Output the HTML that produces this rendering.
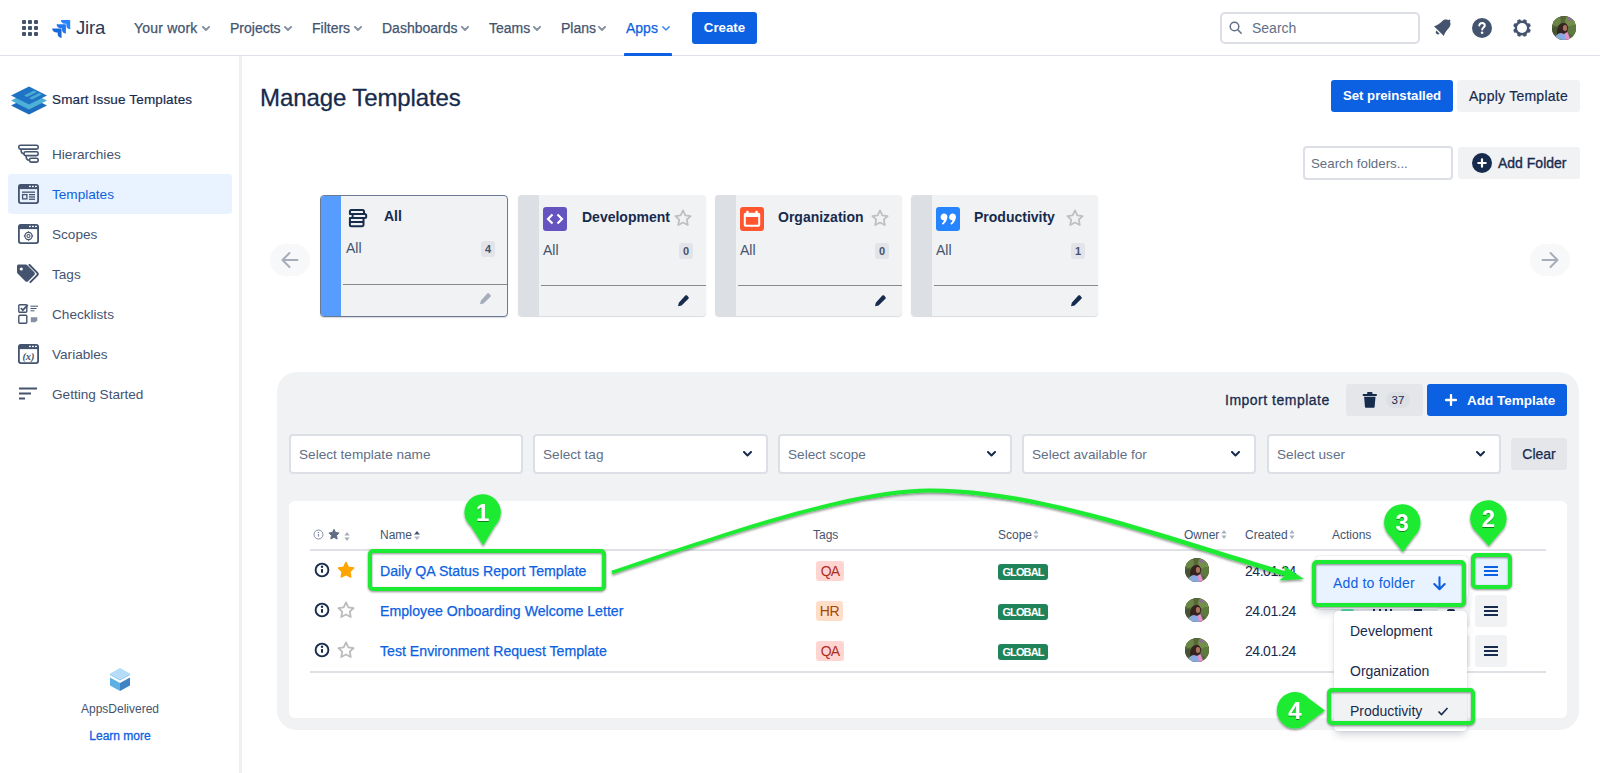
<!DOCTYPE html>
<html><head><meta charset="utf-8"><title>Manage Templates</title>
<style>
*{box-sizing:border-box;margin:0;padding:0}
html,body{width:1600px;height:773px;overflow:hidden;background:#fff}
body{font-family:"Liberation Sans",sans-serif;color:#172b4d;font-size:14px;position:relative}
.abs{position:absolute}
.t{position:absolute;white-space:nowrap;line-height:16px}
/* NAV */
#nav{position:absolute;left:0;top:0;width:1600px;height:56px;border-bottom:1px solid #dfe1e8;background:#fff}
.ni{position:absolute;top:20px;font-size:14px;color:#44546f;white-space:nowrap;line-height:16px;-webkit-text-stroke:.25px currentColor}
.chev{position:absolute;top:25.700px;width:8px;height:5.300px;margin-left:1px}
#create{position:absolute;left:692px;top:12px;width:65px;height:32px;background:#0c61e2;border-radius:3px;color:#fff;font-weight:bold;font-size:13.300px;line-height:32px;text-align:center}
#search{position:absolute;left:1220px;top:12px;width:200px;height:32px;border:2px solid #dcdfe5;border-radius:5px}
/* SIDEBAR */
#side{position:absolute;left:0;top:56px;width:242px;height:717px;border-right:3px solid #eeeff3}
.si{position:absolute;left:52px;font-size:13.600px;color:#44546f;line-height:16px;white-space:nowrap}
.sic{position:absolute;left:18px}
/* MAIN */
.btn{position:absolute;border-radius:3px;height:32px;line-height:32px;font-size:14px;text-align:center;white-space:nowrap}
.bblue{background:#0c61e2;color:#fff;font-weight:bold}
.bgrey{background:#f1f2f4;color:#172b4d}
.card{position:absolute;top:195px;height:121px;background:#f1f2f4;border-radius:4px;overflow:hidden;box-shadow:0 1px 1px rgba(9,30,66,.16)}
.card .stripe{position:absolute;left:0;top:0;bottom:0;width:21px;background:#dcdfe4}
.card .sep{position:absolute;left:23px;right:0;top:90px;height:1px;background:#8a8a8a}
.card .ttl{position:absolute;top:14px;font-weight:bold;font-size:14px;line-height:16px;color:#172b4d;white-space:nowrap}
.card .sub{position:absolute;left:25px;top:47px;font-size:14px;line-height:16px;color:#44546f}
.card .bdg{position:absolute;left:161px;top:48px;width:14px;height:16px;border-radius:3px;background:#e2e4e9;font-size:11px;font-weight:bold;line-height:16px;text-align:center;color:#44546f}
.card .ico{position:absolute;left:25px;top:12px;width:24px;height:24px;border-radius:3px}
.fin{position:absolute;top:434px;width:235px;height:40px;border:2px solid #dcdfe5;border-radius:4px;background:#fff;font-size:13.600px;color:#626f86;line-height:37px;padding-left:8px;white-space:nowrap}
.th{position:absolute;top:528px;font-size:12px;line-height:14px;color:#44546f;white-space:nowrap}
.lnk{position:absolute;left:380px;font-size:14.150px;line-height:20px;-webkit-text-stroke:.25px #0c61e2;color:#0c61e2;white-space:nowrap}
.tag{position:absolute;left:816px;height:20px;border-radius:3px;font-size:14px;line-height:20px;text-align:center}
.glob{position:absolute;left:998px;width:50px;height:16px;border-radius:3px;background:#1f845a;color:#fff;font-weight:bold;font-size:11px;letter-spacing:-.9px;line-height:16px;text-align:center}
.date{position:absolute;left:1245px;font-size:14px;line-height:18px;letter-spacing:-.45px;color:#172b4d}
.av{position:absolute;border-radius:50%;overflow:hidden;background:#4a4a32}
.mbtn{position:absolute;left:1475px;width:32px;height:32px;border-radius:3px;background:#f1f2f4}
.gbox{position:absolute;border:4px solid #1deb33;border-radius:5px;filter:drop-shadow(0 1.500px 1px rgba(0,0,0,.45))}
</style></head><body>
<div id="nav">
 <svg class="abs" style="left:22px;top:20px" width="16" height="16" viewBox="0 0 16 16" fill="#44546f"><rect x="0" y="0" width="4" height="4" rx="1"/><rect x="6" y="0" width="4" height="4" rx="1"/><rect x="12" y="0" width="4" height="4" rx="1"/><rect x="0" y="6" width="4" height="4" rx="1"/><rect x="6" y="6" width="4" height="4" rx="1"/><rect x="12" y="6" width="4" height="4" rx="1"/><rect x="0" y="12" width="4" height="4" rx="1"/><rect x="6" y="12" width="4" height="4" rx="1"/><rect x="12" y="12" width="4" height="4" rx="1"/></svg>
 <!-- jira logo -->
 <svg class="abs" style="left:52px;top:19px" width="18.500" height="18.500" viewBox="0 0 20 20"><path d="M19 1H9.6c0 2.3 1.9 4.2 4.2 4.2h1.7v1.7c0 2.3 1.9 4.2 4.2 4.200V1.700A.7.7 0 0 0 19 1z" fill="#2684ff"/><path d="M14.300 5.700H4.900c0 2.300 1.900 4.200 4.200 4.200h1.700v1.700c0 2.300 1.900 4.200 4.200 4.200V6.400a.7.700 0 0 0-.7-.7z" fill="#2276ee"/><path d="M9.600 10.400H.2c0 2.300 1.900 4.200 4.200 4.200h1.700v1.700c0 2.300 1.900 4.200 4.200 4.200v-9.400a.7.700 0 0 0-.7-.7z" fill="#1868db"/></svg>
 <div class="t" style="left:76px;top:16px;font-size:18.500px;line-height:24px;color:#253858;letter-spacing:-0.2px">Jira</div>
 <div class="ni" style="left:134px;letter-spacing:.2px">Your work</div>
 <div class="ni" style="left:230px">Projects</div>
 <div class="ni" style="left:312px">Filters</div>
 <div class="ni" style="left:382px">Dashboards</div>
 <div class="ni" style="left:489px">Teams</div>
 <div class="ni" style="left:561px">Plans</div>
 <div class="ni" style="left:626px;color:#0c61e2">Apps</div>
 <svg class="chev" style="left:201px" viewBox="0 0 9 6"><path d="M1 1l3.500 3.500L8 1" fill="none" stroke="#8590a2" stroke-width="2.200" stroke-linecap="round" stroke-linejoin="round"/></svg>
 <svg class="chev" style="left:283px" viewBox="0 0 9 6"><path d="M1 1l3.500 3.500L8 1" fill="none" stroke="#8590a2" stroke-width="2.200" stroke-linecap="round" stroke-linejoin="round"/></svg>
 <svg class="chev" style="left:353px" viewBox="0 0 9 6"><path d="M1 1l3.500 3.500L8 1" fill="none" stroke="#8590a2" stroke-width="2.200" stroke-linecap="round" stroke-linejoin="round"/></svg>
 <svg class="chev" style="left:460px" viewBox="0 0 9 6"><path d="M1 1l3.500 3.500L8 1" fill="none" stroke="#8590a2" stroke-width="2.200" stroke-linecap="round" stroke-linejoin="round"/></svg>
 <svg class="chev" style="left:532px" viewBox="0 0 9 6"><path d="M1 1l3.500 3.500L8 1" fill="none" stroke="#8590a2" stroke-width="2.200" stroke-linecap="round" stroke-linejoin="round"/></svg>
 <svg class="chev" style="left:597px" viewBox="0 0 9 6"><path d="M1 1l3.500 3.500L8 1" fill="none" stroke="#8590a2" stroke-width="2.200" stroke-linecap="round" stroke-linejoin="round"/></svg>
 <svg class="chev" style="left:661px" viewBox="0 0 9 6"><path d="M1 1l3.500 3.500L8 1" fill="none" stroke="#4c8df0" stroke-width="1.800" stroke-linecap="round" stroke-linejoin="round"/></svg>
 <div class="abs" style="left:624px;top:53px;width:48px;height:3px;background:#0c61e2;border-radius:1px 1px 0 0"></div>
 <div id="create">Create</div>
 <div id="search">
  <svg class="abs" style="left:7px;top:7px" width="14" height="14" viewBox="0 0 14 14"><circle cx="5.500" cy="5.500" r="4.300" fill="none" stroke="#626f86" stroke-width="1.500"/><path d="M8.800 8.800l3.400 3.400" stroke="#626f86" stroke-width="1.500" stroke-linecap="round"/></svg>
  <div class="t" style="left:30px;top:6px;font-size:14px;color:#626f86">Search</div>
 </div>
 <!-- bell -->
 <svg class="abs" style="left:1431.900px;top:14.100px" width="24" height="24" viewBox="0 0 24 24"><g transform="translate(12 12) rotate(45)" fill="#44546f"><path d="M-7 7.200L7 7.200C5.300 4.500 4.700 1 4.700-2.400C4.700-5.200 2.600-7.300 0-7.300C-2.600-7.300-4.700-5.200-4.700-2.400C-4.700 1-5.300 4.500-7 7.200Z"/><circle cx="0" cy="-7.400" r="1.200"/><path d="M-2.300 8.500A2.300 2.300 0 0 0 2.300 8.500Z"/></g></svg>
 <!-- help -->
 <svg class="abs" style="left:1471px;top:17px" width="22" height="22" viewBox="0 0 22 22"><circle cx="11" cy="11" r="10" fill="#44546f"/><path d="M8.300 8.600c0-1.600 1.200-2.700 2.800-2.700s2.700 1 2.700 2.500c0 2-2.600 2.100-2.600 4.100" fill="none" stroke="#fff" stroke-width="2" stroke-linecap="round"/><circle cx="11.100" cy="15.700" r="1.300" fill="#fff"/></svg>
 <!-- gear -->
 <svg class="abs" style="left:1510.600px;top:16.700px" width="22" height="22" viewBox="0 0 22 22"><g fill="#44546f"><circle cx="11" cy="11" r="7.400"/><rect x="9.200" y="2.100" width="3.600" height="17.800" rx="1" transform="rotate(22.500 11 11)"/><rect x="9.200" y="2.100" width="3.600" height="17.800" rx="1" transform="rotate(67.500 11 11)"/><rect x="9.200" y="2.100" width="3.600" height="17.800" rx="1" transform="rotate(112.500 11 11)"/><rect x="9.200" y="2.100" width="3.600" height="17.800" rx="1" transform="rotate(157.500 11 11)"/></g><circle cx="11" cy="11" r="5" fill="#fff"/></svg>
 <!-- avatar -->
 <div class="av" style="left:1552px;top:16px;width:24px;height:24px"><svg width="24" height="24" viewBox="0 0 24 24"><rect width="24" height="24" fill="#56673a"/><circle cx="4" cy="5" r="5" fill="#6c8547"/><circle cx="19" cy="5" r="6" fill="#748f4a"/><circle cx="21" cy="14" r="5" fill="#5f7a40"/><circle cx="3" cy="15" r="4" fill="#465433"/><circle cx="17" cy="3" r="2" fill="#8d6f9a"/><path d="M5.500 20c-1.500-6 .5-13 6-13 3 0 4.500 2 4.500 5l-2 8z" fill="#35231e"/><ellipse cx="13" cy="12" rx="2.100" ry="3" fill="#a77462"/><path d="M3 24c0-4 2-6.500 6-7l5 1.500V24z" fill="#86aadd"/><path d="M12.500 17.500l3-1.500 3 8h-4.500z" fill="#e88fcd"/></svg></div>
</div>

<div id="side">
 <!-- logo -->
 <svg class="abs" style="left:10px;top:30px" width="38" height="29" viewBox="0 0 38 29"><path d="M19 10.500L37 19.500 19 28.500 1 19.500z" fill="#1d6cc0"/><path d="M19 5.500L37 14.500 19 23.500 1 14.500z" fill="#4eb0d6"/><path d="M19 .5L37 9.500 19 18.500 1 9.500z" fill="#1f73c4"/><path d="M14 9.500l10-5 3 1.500-10 5zM19 12l10-5 3 1.500-10 5z" fill="#4eb0d6" opacity=".9"/></svg>
 <div class="t" style="left:52px;top:36px;font-size:13.500px;color:#172b4d;letter-spacing:.15px;-webkit-text-stroke:.2px #172b4d">Smart Issue Templates</div>
 <div class="abs" style="left:8px;top:118px;width:224px;height:40px;background:#e9f2ff;border-radius:3px"></div>
 <div class="si" style="top:91px">Hierarchies</div>
 <div class="si" style="top:131px;color:#0c61e2">Templates</div>
 <div class="si" style="top:171px">Scopes</div>
 <div class="si" style="top:211px">Tags</div>
 <div class="si" style="top:251px">Checklists</div>
 <div class="si" style="top:291px">Variables</div>
 <div class="si" style="top:331px">Getting Started</div>
 <!-- hierarchies icon -->
 <svg class="sic" style="top:88px" width="21" height="20" viewBox="0 0 21 20" fill="none" stroke="#44546f" stroke-width="1.600"><rect x=".8" y="1.300" width="19.400" height="3.800" rx="1.600"/><rect x="6" y="7.800" width="14.200" height="3.800" rx="1.600"/><rect x="11.500" y="14.300" width="8.700" height="3.800" rx="1.600"/><path d="M3 5.200c0 3 1.500 4.500 3 4.500M8 11.700c0 3 1.500 4.500 3.500 4.500"/></svg>
 <!-- templates icon -->
 <svg class="sic" style="top:128px" width="21" height="20" viewBox="0 0 21 20"><rect x=".9" y=".9" width="19.200" height="18.200" rx="2" fill="none" stroke="#44546f" stroke-width="1.800"/><rect x=".9" y=".9" width="19.200" height="4.200" fill="#44546f"/><rect x="11" y="1.800" width="1.800" height="1.300" fill="#fff"/><rect x="14" y="1.800" width="1.800" height="1.300" fill="#fff"/><rect x="17" y="1.800" width="1.800" height="1.300" fill="#fff"/><rect x="4" y="7.500" width="13" height="1.300" fill="#44546f"/><rect x="4.600" y="10.600" width="4.300" height="4.300" fill="none" stroke="#44546f" stroke-width="1.300"/><rect x="11" y="10" width="6" height="1.300" fill="#44546f"/><rect x="11" y="12.300" width="6" height="1.300" fill="#44546f"/><rect x="11" y="14.600" width="6" height="1.300" fill="#44546f"/></svg>
 <!-- scopes icon -->
 <svg class="sic" style="top:168px" width="21" height="20" viewBox="0 0 21 20"><rect x=".9" y=".9" width="19.200" height="18.200" rx="2" fill="none" stroke="#44546f" stroke-width="1.800"/><rect x=".9" y=".9" width="19.200" height="4.200" fill="#44546f"/><rect x="11" y="1.800" width="1.800" height="1.300" fill="#fff"/><rect x="14" y="1.800" width="1.800" height="1.300" fill="#fff"/><rect x="17" y="1.800" width="1.800" height="1.300" fill="#fff"/><circle cx="10.500" cy="12" r="3.600" fill="none" stroke="#44546f" stroke-width="1.200"/><circle cx="10.500" cy="12" r="1.500" fill="none" stroke="#44546f" stroke-width="1.100"/><path d="M10.500 7.300v1.400M10.500 15.300v1.400M5.800 12h1.400M13.800 12h1.400" stroke="#44546f" stroke-width="1.100"/></svg>
 <!-- tags icon -->
 <svg class="abs" style="left:16px;top:208px" width="24" height="20" viewBox="0 0 24 20"><path d="M1 2.200C1 1.300 1.700.6 2.600.6h7.200c.6 0 1.100.2 1.500.6l7 7c.8.800.8 2 0 2.800l-6.200 6.200c-.8.800-2 .8-2.800 0l-7.700-7.600C1.200 9.200 1 8.700 1 8.100z" fill="#44546f"/><circle cx="5.300" cy="5" r="1.600" fill="#fff"/><path d="M13.500 1l7.600 7.600c.8.800.8 2 0 2.800l-6.700 6.700" fill="none" stroke="#44546f" stroke-width="2" stroke-linecap="round"/></svg>
 <!-- checklists icon -->
 <svg class="sic" style="top:248px" width="21" height="20" viewBox="0 0 21 20" fill="none" stroke="#44546f"><rect x=".8" y=".8" width="8" height="7.400" rx="1" stroke-width="1.400"/><path d="M2.800 4l2 2.200L9.800.8" stroke-width="1.700"/><rect x=".8" y="11.200" width="8" height="8" rx="1" stroke-width="1.400"/><path d="M12.500 2.200h7.500M12.500 4.500h6M12.500 6.800h4" stroke-width="1"/><path d="M12.800 13.200h6.500v3l-2 2h-4.500z" fill="#8590a2" stroke="none"/></svg>
 <!-- variables icon -->
 <svg class="sic" style="top:288px" width="21" height="20" viewBox="0 0 21 20"><rect x=".9" y=".9" width="19.200" height="18.200" rx="2" fill="none" stroke="#44546f" stroke-width="1.800"/><rect x=".9" y=".9" width="19.200" height="4.200" fill="#44546f"/><rect x="11" y="1.800" width="1.800" height="1.300" fill="#fff"/><rect x="14" y="1.800" width="1.800" height="1.300" fill="#fff"/><rect x="17" y="1.800" width="1.800" height="1.300" fill="#fff"/><text x="10.500" y="15.500" text-anchor="middle" font-family="Liberation Serif,serif" font-style="italic" font-weight="bold" font-size="10.500" fill="#44546f">(x)</text></svg>
 <!-- getting started icon -->
 <svg class="abs" style="left:19px;top:331px" width="18" height="13" viewBox="0 0 18 13" stroke="#44546f" stroke-width="2"><path d="M0 1.500h18M0 6.500h12M0 11.500h6"/></svg>
 <!-- footer -->
 <svg class="abs" style="left:110px;top:612px" width="20" height="23" viewBox="0 0 20 23"><path d="M0 9.500L10 15v8L0 17.500z" fill="#5fb0e2"/><path d="M20 9.500L10 15v8l10-5.500z" fill="#3f83c4"/><path d="M0 5.500L10 11l10-5.500V7L10 12.500 0 7z" fill="#8fcaf0"/><path d="M10 0l10 5.500L10 11 0 5.500z" fill="#b5dcf8"/></svg>
 <div class="t" style="left:0;width:240px;text-align:center;top:645px;font-size:12px;color:#44546f">AppsDelivered</div>
 <div class="t" style="left:0;width:240px;text-align:center;top:672px;font-size:12px;color:#0c61e2;-webkit-text-stroke:.3px #0c61e2">Learn more</div>
</div>

<!-- MAIN -->
<div class="t" style="left:260px;top:83px;font-size:24px;line-height:30px;color:#172b4d;letter-spacing:-.1px;-webkit-text-stroke:.3px #172b4d" id="h1">Manage Templates</div>
<div class="btn bblue" style="left:1331px;top:80px;width:122px;font-size:13.200px">Set preinstalled</div>
<div class="btn bgrey" style="left:1457px;top:80px;width:123px;letter-spacing:.25px;-webkit-text-stroke:.2px #172b4d">Apply Template</div>
<div class="abs" style="left:1303px;top:146px;width:150px;height:34px;border:2px solid #dcdfe5;border-radius:4px"><div class="t" style="left:6px;top:8px;font-size:13.300px;color:#626f86">Search folders...</div></div>
<div class="btn bgrey" style="left:1458px;top:147px;width:122px"></div>
<svg class="abs" style="left:1472px;top:153px" width="20" height="20" viewBox="0 0 20 20"><circle cx="10" cy="10" r="10" fill="#172b4d"/><path d="M10 6.300v7.400M6.300 10h7.400" stroke="#fff" stroke-width="2.200" stroke-linecap="round"/></svg>
<div class="t" style="left:1498px;top:155px;font-size:14px;color:#172b4d;-webkit-text-stroke:.35px #172b4d">Add Folder</div>
<!-- arrows -->
<div class="abs" style="left:270px;top:244px;width:40px;height:32px;border-radius:16px;background:#f7f8f9"><svg class="abs" style="left:11px;top:7px" width="18" height="18" viewBox="0 0 18 18"><path d="M16.500 9H2M8.500 2L1.500 9l7 7" fill="none" stroke="#a5adba" stroke-width="2" stroke-linecap="round" stroke-linejoin="round"/></svg></div>
<div class="abs" style="left:1530px;top:244px;width:40px;height:32px;border-radius:16px;background:#f7f8f9"><svg class="abs" style="left:11px;top:7px" width="18" height="18" viewBox="0 0 18 18"><path d="M1.500 9H16M9.500 2l7 7-7 7" fill="none" stroke="#a5adba" stroke-width="2" stroke-linecap="round" stroke-linejoin="round"/></svg></div>
<!-- cards -->
<div class="card" style="left:320px;width:188px;height:122px;border:1px solid #6b7a94">
 <div class="stripe" style="background:#579dff;width:20px"></div>
 <div class="sep" style="left:22px;top:88px"></div>
 <svg class="abs" style="left:27px;top:12.800px" width="20" height="19" viewBox="0 0 20 19" fill="none" stroke="#172b4d" stroke-width="2" stroke-linejoin="round"><path d="M3.400 1H14.500a1.500 1.500 0 0 1 1.500 1.500V5.100H1.900V2.500a1.500 1.500 0 0 1 1.500-1.500z"/><path d="M4.600 5.100H16.700a1.500 1.500 0 0 1 1.500 1.500v1a1.500 1.500 0 0 1-1.500 1.500H4.600z"/><path d="M1.900 9.100H15.500V15.700a1.500 1.500 0 0 1-1.500 1.500H3.400a1.500 1.500 0 0 1-1.500-1.500zM1.900 13.100H15.500"/></svg>
 <div class="ttl" style="left:63px;top:12px">All</div>
 <div class="sub" style="left:25px;top:44px">All</div>
 <div class="bdg" style="left:160px;top:45px">4</div>
 <svg class="abs" style="left:158px;top:96px" width="13" height="13" viewBox="0 0 13 13"><path d="M8.300 1.600c.5-.5 1.300-.5 1.800 0l1.300 1.300c.5.500.5 1.300 0 1.800L4.600 11.500 1 12.300l.8-3.600z" fill="#a5adba"/></svg>
</div>
<div class="card" style="left:518px;width:188px">
 <div class="stripe"></div>
<div class="sep"></div>
 <div class="ico" style="background:#6554c0"><svg width="24" height="24" viewBox="0 0 24 24"><path d="M9.500 7.500L5 12l4.500 4.500M14.500 7.500L19 12l-4.500 4.500" fill="none" stroke="#fff" stroke-width="2.200"/></svg></div>
 <div class="ttl" style="left:64px">Development</div>
 <svg class="abs" style="left:156px;top:14px" width="18" height="17" viewBox="0 0 17 16"><path d="M8.500 1.300l2.200 4.600 5 .7-3.600 3.500.9 5-4.500-2.400L4 15.100l.9-5L1.300 6.600l5-.7z" fill="none" stroke="#c0c0c3" stroke-width="1.700" stroke-linejoin="round"/></svg>
 <div class="sub">All</div>
<div class="bdg">0</div>
 <svg class="abs" style="left:159px;top:99px" width="13" height="13" viewBox="0 0 13 13"><path d="M8.300 1.600c.5-.5 1.300-.5 1.800 0l1.300 1.300c.5.500.5 1.300 0 1.800L4.600 11.500 1 12.300l.8-3.600z" fill="#172b4d"/></svg>
</div>
<div class="card" style="left:715px;width:187px">
 <div class="stripe"></div>
<div class="sep"></div>
 <div class="ico" style="background:#ff5630"><svg width="24" height="24" viewBox="0 0 24 24"><rect x="3.800" y="5.800" width="16.400" height="14" rx="1.800" fill="#fff"/><rect x="6.300" y="3.800" width="2.300" height="4" rx=".6" fill="#fff"/><rect x="15.400" y="3.800" width="2.300" height="4" rx=".6" fill="#fff"/><rect x="5.800" y="10" width="12.400" height="7.800" rx=".6" fill="#ff5630"/></svg></div>
 <div class="ttl" style="left:63px">Organization</div>
 <svg class="abs" style="left:156px;top:14px" width="18" height="17" viewBox="0 0 17 16"><path d="M8.500 1.300l2.200 4.600 5 .7-3.600 3.500.9 5-4.500-2.400L4 15.100l.9-5L1.300 6.600l5-.7z" fill="none" stroke="#c0c0c3" stroke-width="1.700" stroke-linejoin="round"/></svg>
 <div class="sub">All</div>
<div class="bdg" style="left:160px">0</div>
 <svg class="abs" style="left:159px;top:99px" width="13" height="13" viewBox="0 0 13 13"><path d="M8.300 1.600c.5-.5 1.300-.5 1.800 0l1.300 1.300c.5.500.5 1.300 0 1.800L4.600 11.500 1 12.300l.8-3.600z" fill="#172b4d"/></svg>
</div>
<div class="card" style="left:911px;width:187px">
 <div class="stripe"></div>
<div class="sep"></div>
 <div class="ico" style="background:#2684ff"><svg width="24" height="24" viewBox="1.500 1.500 21 21" fill="#fff"><path d="M5.500 10.200a3 3 0 1 1 5.900.8c-.4 2.600-1.800 4.600-3.800 6l-1-1c1-.9 1.600-1.800 1.900-2.900a3 3 0 0 1-3-2.900zM13 10.200a3 3 0 1 1 5.900.8c-.4 2.600-1.800 4.600-3.800 6l-1-1c1-.9 1.600-1.800 1.900-2.900a3 3 0 0 1-3-2.900z"/></svg></div>
 <div class="ttl" style="left:63px">Productivity</div>
 <svg class="abs" style="left:155px;top:14px" width="18" height="17" viewBox="0 0 17 16"><path d="M8.500 1.300l2.200 4.600 5 .7-3.600 3.500.9 5-4.500-2.400L4 15.100l.9-5L1.300 6.600l5-.7z" fill="none" stroke="#c0c0c3" stroke-width="1.700" stroke-linejoin="round"/></svg>
 <div class="sub">All</div>
<div class="bdg" style="left:160px">1</div>
 <svg class="abs" style="left:159px;top:99px" width="13" height="13" viewBox="0 0 13 13"><path d="M8.300 1.600c.5-.5 1.300-.5 1.800 0l1.300 1.300c.5.500.5 1.300 0 1.800L4.600 11.500 1 12.300l.8-3.600z" fill="#172b4d"/></svg>
</div>

<div class="abs" style="left:277px;top:372px;width:1302px;height:358px;border-radius:20px;background:#f1f2f4"></div>
<div class="t" style="left:1225px;top:392px;font-size:14px;letter-spacing:.5px;color:#172b4d;-webkit-text-stroke:.3px #172b4d">Import template</div>
<div class="abs" style="left:1346px;top:384px;width:77px;height:32px;border-radius:3px;background:#e4e6ea"></div>
<svg class="abs" style="left:1362px;top:392px" width="15.600" height="15.800" viewBox="0 0 16 18" fill="#172b4d"><rect x="0" y="2.300" width="16" height="2.200" rx=".6"/><rect x="5" y="0" width="6" height="3" rx=".8"/><path d="M1.500 5.500h13l-1 11.200c0 .7-.6 1.300-1.300 1.300H3.800c-.7 0-1.300-.6-1.300-1.300z"/></svg>
<div class="abs" style="left:1386px;top:392px;width:24px;height:16px;border-radius:8px;background:#dcdfe4;font-size:11.500px;line-height:16px;text-align:center;color:#172b4d">37</div>
<div class="btn bblue" style="left:1427px;top:384px;width:140px"></div>
<svg class="abs" style="left:1445px;top:394px" width="12" height="12" viewBox="0 0 12 12"><path d="M6 1v10M1 6h10" stroke="#fff" stroke-width="2.300" stroke-linecap="round"/></svg>
<div class="t" style="left:1467px;top:392.600px;font-size:13.500px;font-weight:bold;color:#fff">Add Template</div>
<div class="fin" style="left:289px;width:234px">Select template name</div>
<div class="fin" style="left:533px">Select tag</div>
<div class="fin" style="left:778px;width:234px">Select scope</div>
<div class="fin" style="left:1022px;width:234px">Select available for</div>
<div class="fin" style="left:1267px;width:234px">Select user</div>
<svg class="abs" style="left:743px;top:451px" width="9" height="6" viewBox="0 0 9 6"><path d="M1 1l3.500 3.500L8 1" fill="none" stroke="#172b4d" stroke-width="2" stroke-linecap="round" stroke-linejoin="round"/></svg>
<svg class="abs" style="left:987px;top:451px" width="9" height="6" viewBox="0 0 9 6"><path d="M1 1l3.500 3.500L8 1" fill="none" stroke="#172b4d" stroke-width="2" stroke-linecap="round" stroke-linejoin="round"/></svg>
<svg class="abs" style="left:1231px;top:451px" width="9" height="6" viewBox="0 0 9 6"><path d="M1 1l3.500 3.500L8 1" fill="none" stroke="#172b4d" stroke-width="2" stroke-linecap="round" stroke-linejoin="round"/></svg>
<svg class="abs" style="left:1476px;top:451px" width="9" height="6" viewBox="0 0 9 6"><path d="M1 1l3.500 3.500L8 1" fill="none" stroke="#172b4d" stroke-width="2" stroke-linecap="round" stroke-linejoin="round"/></svg>
<div class="btn" style="left:1511px;top:438px;width:56px;background:#e4e6ea;color:#172b4d;-webkit-text-stroke:.25px #172b4d">Clear</div>
<!-- table card -->
<div class="abs" style="left:289px;top:501px;width:1278px;height:217px;border-radius:6px;background:#fff"></div>
<svg class="abs" style="left:312.500px;top:528.500px" width="11" height="11" viewBox="0 0 11 11"><circle cx="5.500" cy="5.500" r="4.500" fill="none" stroke="#8590a2" stroke-width="1"/><rect x="4.900" y="5" width="1.200" height="2.600" fill="#8590a2"/><circle cx="5.500" cy="3.500" r=".75" fill="#8590a2"/></svg>
<svg class="abs" style="left:328px;top:528px" width="12" height="12" viewBox="0 0 17 16"><path d="M8.500 1.300l2.200 4.600 5 .7-3.600 3.500.9 5-4.500-2.400L4 15.100l.9-5L1.300 6.600l5-.7z" fill="#5e6c84" stroke="#5e6c84" stroke-width="1.400" stroke-linejoin="round"/></svg>
<svg class="abs" style="left:344px;top:532px" width="6" height="9" viewBox="0 0 6 9" fill="#a5adba"><path d="M3 0l2.600 3.500H.4zM3 9L.4 5.500h5.200z"/></svg>
<div class="th" style="left:380px">Name</div>
<svg class="abs" style="left:414px;top:530.500px" width="6" height="9" viewBox="0 0 6 9"><path d="M3 0l3 3.500H0z" fill="#44546f"/><path d="M3 9L0 5.500h6z" fill="#b3b9c4"/></svg>
<div class="th" style="left:813px">Tags</div>
<div class="th" style="left:998px">Scope</div>
<svg class="abs" style="left:1033px;top:530px" width="6" height="9" viewBox="0 0 6 9" fill="#a8afbd"><path d="M3 0l2.600 3.500H.4zM3 9L.4 5.500h5.200z"/></svg>
<div class="th" style="left:1184px">Owner</div>
<svg class="abs" style="left:1221px;top:530px" width="6" height="9" viewBox="0 0 6 9" fill="#a8afbd"><path d="M3 0l2.600 3.500H.4zM3 9L.4 5.500h5.200z"/></svg>
<div class="th" style="left:1245px">Created</div>
<svg class="abs" style="left:1289px;top:530px" width="6" height="9" viewBox="0 0 6 9" fill="#a8afbd"><path d="M3 0l2.600 3.500H.4zM3 9L.4 5.500h5.200z"/></svg>
<div class="th" style="left:1332px">Actions</div>
<div class="abs" style="left:310px;top:549px;width:1236px;height:2px;background:#dfe1e6"></div>
<div class="abs" style="left:310px;top:671px;width:1236px;height:2px;background:#dfe1e6"></div>
<svg class="abs" style="left:314px;top:562px" width="16" height="16" viewBox="0 0 16 16"><circle cx="8" cy="8" r="6.400" fill="none" stroke="#172b4d" stroke-width="1.900"/><rect x="7" y="7" width="2" height="3.800" rx=".5" fill="#172b4d"/><circle cx="8" cy="4.800" r="1.200" fill="#172b4d"/></svg>
<svg class="abs" style="left:337px;top:561px" width="18" height="17" viewBox="0 0 17 16"><path d="M8.500 1.300l2.200 4.600 5 .7-3.600 3.500.9 5-4.500-2.400L4 15.100l.9-5L1.300 6.600l5-.7z" fill="#ffa400" stroke="#ffa400" stroke-width="1.400" stroke-linejoin="round"/></svg>
<div class="lnk" style="top:561px">Daily QA Status Report Template</div>
<div class="tag" style="top:561px;width:28px;background:#ffd5d2;color:#ae2e24;letter-spacing:-.8px">QA</div>
<div class="glob" style="top:564px">GLOBAL</div>
<div class="av" style="left:1185px;top:558px;width:24px;height:24px"><svg width="24" height="24" viewBox="0 0 24 24"><rect width="24" height="24" fill="#56673a"/><circle cx="4" cy="5" r="5" fill="#6c8547"/><circle cx="19" cy="5" r="6" fill="#748f4a"/><circle cx="21" cy="14" r="5" fill="#5f7a40"/><circle cx="3" cy="15" r="4" fill="#465433"/><circle cx="17" cy="3" r="2" fill="#8d6f9a"/><path d="M5.500 20c-1.500-6 .5-13 6-13 3 0 4.500 2 4.500 5l-2 8z" fill="#35231e"/><ellipse cx="13" cy="12" rx="2.100" ry="3" fill="#a77462"/><path d="M3 24c0-4 2-6.500 6-7l5 1.500V24z" fill="#86aadd"/><path d="M12.500 17.500l3-1.500 3 8h-4.500z" fill="#e88fcd"/></svg></div>
<div class="date" style="top:562px">24.01.24</div>
<div class="mbtn" style="top:555px;background:#e9f2ff"></div>
<svg class="abs" style="left:1484px;top:566px" width="14" height="10" viewBox="0 0 14 10" stroke="#0c61e2" stroke-width="2"><path d="M0 1h14M0 5h14M0 9h14"/></svg>
<svg class="abs" style="left:314px;top:602px" width="16" height="16" viewBox="0 0 16 16"><circle cx="8" cy="8" r="6.400" fill="none" stroke="#172b4d" stroke-width="1.900"/><rect x="7" y="7" width="2" height="3.800" rx=".5" fill="#172b4d"/><circle cx="8" cy="4.800" r="1.200" fill="#172b4d"/></svg>
<svg class="abs" style="left:337px;top:601px" width="18" height="17" viewBox="0 0 17 16"><path d="M8.500 1.300l2.200 4.600 5 .7-3.600 3.500.9 5-4.500-2.400L4 15.100l.9-5L1.300 6.600l5-.7z" fill="none" stroke="#bcbcbe" stroke-width="1.700" stroke-linejoin="round"/></svg>
<div class="lnk" style="top:601px">Employee Onboarding Welcome Letter</div>
<div class="tag" style="top:601px;width:27px;background:#fedec8;color:#a54800;letter-spacing:-.3px">HR</div>
<div class="glob" style="top:604px">GLOBAL</div>
<div class="av" style="left:1185px;top:598px;width:24px;height:24px"><svg width="24" height="24" viewBox="0 0 24 24"><rect width="24" height="24" fill="#56673a"/><circle cx="4" cy="5" r="5" fill="#6c8547"/><circle cx="19" cy="5" r="6" fill="#748f4a"/><circle cx="21" cy="14" r="5" fill="#5f7a40"/><circle cx="3" cy="15" r="4" fill="#465433"/><circle cx="17" cy="3" r="2" fill="#8d6f9a"/><path d="M5.500 20c-1.500-6 .5-13 6-13 3 0 4.500 2 4.500 5l-2 8z" fill="#35231e"/><ellipse cx="13" cy="12" rx="2.100" ry="3" fill="#a77462"/><path d="M3 24c0-4 2-6.500 6-7l5 1.500V24z" fill="#86aadd"/><path d="M12.500 17.500l3-1.500 3 8h-4.500z" fill="#e88fcd"/></svg></div>
<div class="date" style="top:602px">24.01.24</div>
<div class="mbtn" style="top:595px"></div>
<svg class="abs" style="left:1484px;top:606px" width="14" height="10" viewBox="0 0 14 10" stroke="#172b4d" stroke-width="2"><path d="M0 1h14M0 5h14M0 9h14"/></svg>
<svg class="abs" style="left:314px;top:642px" width="16" height="16" viewBox="0 0 16 16"><circle cx="8" cy="8" r="6.400" fill="none" stroke="#172b4d" stroke-width="1.900"/><rect x="7" y="7" width="2" height="3.800" rx=".5" fill="#172b4d"/><circle cx="8" cy="4.800" r="1.200" fill="#172b4d"/></svg>
<svg class="abs" style="left:337px;top:641px" width="18" height="17" viewBox="0 0 17 16"><path d="M8.500 1.300l2.200 4.600 5 .7-3.600 3.500.9 5-4.500-2.400L4 15.100l.9-5L1.300 6.600l5-.7z" fill="none" stroke="#bcbcbe" stroke-width="1.700" stroke-linejoin="round"/></svg>
<div class="lnk" style="top:641px">Test Environment Request Template</div>
<div class="tag" style="top:641px;width:28px;background:#ffd5d2;color:#ae2e24;letter-spacing:-.8px">QA</div>
<div class="glob" style="top:644px">GLOBAL</div>
<div class="av" style="left:1185px;top:638px;width:24px;height:24px"><svg width="24" height="24" viewBox="0 0 24 24"><rect width="24" height="24" fill="#56673a"/><circle cx="4" cy="5" r="5" fill="#6c8547"/><circle cx="19" cy="5" r="6" fill="#748f4a"/><circle cx="21" cy="14" r="5" fill="#5f7a40"/><circle cx="3" cy="15" r="4" fill="#465433"/><circle cx="17" cy="3" r="2" fill="#8d6f9a"/><path d="M5.500 20c-1.500-6 .5-13 6-13 3 0 4.500 2 4.500 5l-2 8z" fill="#35231e"/><ellipse cx="13" cy="12" rx="2.100" ry="3" fill="#a77462"/><path d="M3 24c0-4 2-6.500 6-7l5 1.500V24z" fill="#86aadd"/><path d="M12.500 17.500l3-1.500 3 8h-4.500z" fill="#e88fcd"/></svg></div>
<div class="date" style="top:642px">24.01.24</div>
<div class="mbtn" style="top:635px"></div>
<svg class="abs" style="left:1484px;top:646px" width="14" height="10" viewBox="0 0 14 10" stroke="#172b4d" stroke-width="2"><path d="M0 1h14M0 5h14M0 9h14"/></svg>

<!-- first popup (row actions) -->
<div class="abs" style="left:1316px;top:556px;width:152px;height:53px;background:#fff;border-radius:3px;box-shadow:0 0 1px rgba(9,30,66,.31),0 4px 8px -2px rgba(9,30,66,.25)"></div>
<!-- row 2 / 3 action buttons peeking -->
<div class="abs" style="left:1438px;top:595px;width:32px;height:32px;border-radius:3px;background:#f1f2f4"></div>
<div class="abs" style="left:1438px;top:635px;width:32px;height:32px;border-radius:3px;background:#f1f2f4"></div>
<div class="abs" style="left:1341px;top:609px;width:13px;height:4px;border-radius:2px 2px 0 0;background:#4bce97"></div>
<div class="abs" style="left:1373px;top:609px;width:2px;height:3px;background:#172b4d"></div>
<div class="abs" style="left:1379px;top:609px;width:2px;height:3px;background:#172b4d"></div>
<div class="abs" style="left:1385px;top:609px;width:2px;height:3px;background:#172b4d"></div>
<div class="abs" style="left:1390px;top:609px;width:2px;height:3px;background:#172b4d"></div>
<div class="abs" style="left:1414px;top:609px;width:8px;height:3px;background:#172b4d"></div>
<div class="abs" style="left:1447px;top:609px;width:8px;height:3px;border-radius:2px 2px 0 0;background:#172b4d"></div>
<!-- dropdown -->
<div class="abs" style="left:1334px;top:611px;width:133px;height:120px;background:#fff;border-radius:4px;box-shadow:0 0 1px rgba(9,30,66,.31),0 5px 9px -2px rgba(9,30,66,.22)"></div>
<div class="abs" style="left:1334px;top:691px;width:133px;height:38px;background:#f1f2f4"></div>
<div class="t" style="left:1350px;top:623px">Development</div>
<div class="t" style="left:1350px;top:663px">Organization</div>
<div class="t" style="left:1350px;top:703px">Productivity</div>
<svg class="abs" style="left:1437px;top:706px" width="12" height="10" viewBox="0 0 12 10"><path d="M1.500 5.500l3 3L10.500 2" fill="none" stroke="#172b4d" stroke-width="1.600"/></svg>
<!-- add to folder highlighted -->
<div class="abs" style="left:1316px;top:564px;width:146px;height:39px;background:#e9f2ff"></div>
<div class="t" style="left:1333px;top:575px;color:#0c61e2;letter-spacing:.18px">Add to folder</div>
<svg class="abs" style="left:1432px;top:576px" width="15" height="15" viewBox="0 0 15 15"><path d="M7.500 1.300v11.700M2.300 8l5.200 5.200L12.700 8" fill="none" stroke="#0c61e2" stroke-width="2.100" stroke-linecap="round" stroke-linejoin="round"/></svg>
<!-- green annotations -->
<div class="gbox" style="left:368px;top:549px;width:238px;height:42px"></div>
<div class="gbox" style="left:1312px;top:560px;width:154px;height:47px"></div>
<div class="gbox" style="left:1471px;top:553px;width:41px;height:36px"></div>
<div class="gbox" style="left:1327px;top:688px;width:148px;height:37px"></div>
<svg class="abs" style="left:0;top:0" width="1600" height="773" viewBox="0 0 1600 773">
<defs><filter id="ds" x="-20%" y="-20%" width="140%" height="150%"><feDropShadow dx="0" dy="1.500" stdDeviation="1" flood-color="#000" flood-opacity=".45"/></filter><filter id="ts" x="-20%" y="-20%" width="140%" height="150%"><feDropShadow dx="0" dy="1" stdDeviation=".6" flood-color="#000" flood-opacity=".45"/></filter></defs>
<g filter="url(#ds)"><path d="M612.6 574.2 L626.2 569.6 L640.0 564.9 L654.0 560.2 L668.1 555.5 L682.3 550.7 L696.6 546.0 L710.9 541.4 L725.2 536.8 L739.5 532.3 L753.8 527.9 L768.0 523.7 L782.0 519.7 L795.9 515.8 L809.7 512.1 L823.2 508.7 L836.4 505.6 L849.4 502.7 L862.1 500.1 L874.5 497.9 L886.5 496.0 L898.0 494.5 L909.2 493.4 L919.8 492.8 L930.0 492.6 L943.8 492.8 L957.8 493.6 L971.9 494.8 L986.3 496.4 L1000.7 498.4 L1015.4 500.8 L1030.1 503.6 L1045.0 506.6 L1060.0 510.0 L1075.1 513.6 L1090.2 517.5 L1105.4 521.6 L1120.7 525.8 L1135.9 530.2 L1151.2 534.8 L1166.5 539.4 L1181.8 544.1 L1197.1 548.9 L1212.3 553.6 L1227.4 558.4 L1242.6 563.1 L1257.6 567.8 L1272.5 572.4 L1287.3 576.8 L1288.7 572.2 L1273.9 567.8 L1259.0 563.2 L1243.9 558.6 L1228.8 553.9 L1213.7 549.2 L1198.4 544.4 L1183.2 539.7 L1167.9 535.0 L1152.5 530.4 L1137.2 525.9 L1121.9 521.5 L1106.6 517.3 L1091.3 513.2 L1076.1 509.4 L1061.0 505.8 L1045.9 502.4 L1031.0 499.3 L1016.1 496.6 L1001.4 494.2 L986.8 492.2 L972.3 490.6 L958.0 489.4 L943.9 488.7 L930.0 488.4 L919.7 488.7 L908.8 489.4 L897.6 490.5 L885.9 492.0 L873.8 494.0 L861.4 496.2 L848.6 498.8 L835.6 501.7 L822.2 504.9 L808.7 508.4 L794.9 512.1 L781.0 516.0 L766.9 520.1 L752.7 524.3 L738.4 528.7 L724.1 533.2 L709.8 537.9 L695.4 542.5 L681.1 547.3 L666.9 552.0 L652.8 556.8 L638.8 561.5 L625.0 566.2 L611.4 570.8Z" fill="#1deb33"/><path d="M1304 579L1283.400 565.400L1286.500 574.200L1279.300 580.500Z" fill="#1deb33"/></g>
<path d="M470.7 526.1L483.2 545.5L495.0 525.7A18.2 18.2 0 1 0 470.7 526.1Z" fill="#1deb33" filter="url(#ds)"/><text x="482.6" y="521.0" text-anchor="middle" font-family="Liberation Sans,sans-serif" font-weight="bold" font-size="24" fill="#fff" filter="url(#ts)">1</text>
<path d="M1476.4 532.2L1488.8 546L1500.8 531.8A18.2 18.2 0 1 0 1476.4 532.2Z" fill="#1deb33" filter="url(#ds)"/><text x="1488.4" y="527.1" text-anchor="middle" font-family="Liberation Sans,sans-serif" font-weight="bold" font-size="24" fill="#fff" filter="url(#ts)">2</text>
<path d="M1390.4 536.2L1402.8 552L1414.7 535.8A18.2 18.2 0 1 0 1390.4 536.2Z" fill="#1deb33" filter="url(#ds)"/><text x="1402.3" y="531.1" text-anchor="middle" font-family="Liberation Sans,sans-serif" font-weight="bold" font-size="24" fill="#fff" filter="url(#ts)">3</text>
<path d="M1308.4 722.6L1325 710.5L1308.6 698.2A18.2 18.2 0 1 0 1308.4 722.6Z" fill="#1deb33" filter="url(#ds)"/><text x="1295" y="718.9" text-anchor="middle" font-family="Liberation Sans,sans-serif" font-weight="bold" font-size="24" fill="#fff" filter="url(#ts)">4</text>
</svg>


</body></html>
